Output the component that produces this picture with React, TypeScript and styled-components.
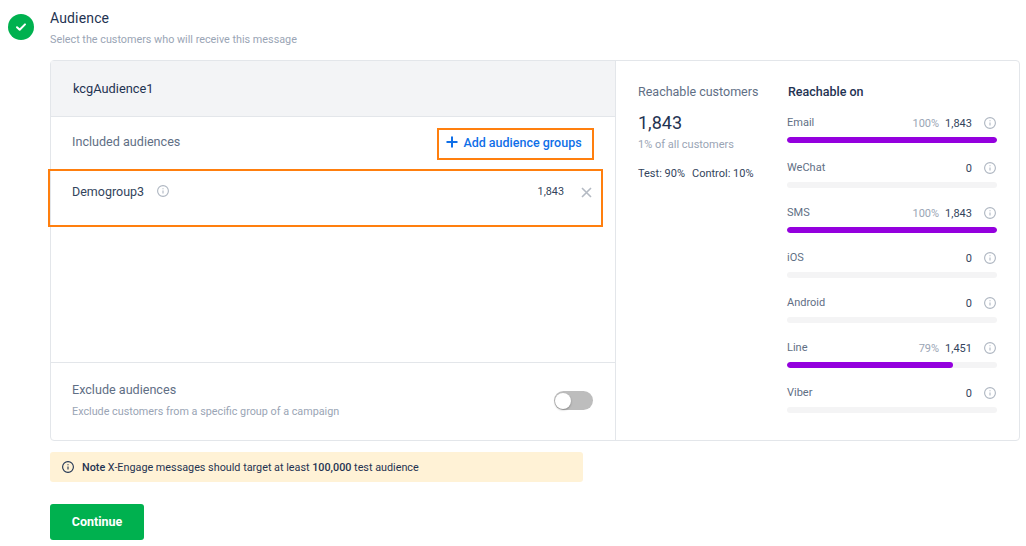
import React from 'react';
import styled, { createGlobalStyle } from 'styled-components';

const GlobalStyle = createGlobalStyle`
  html, body { margin: 0; padding: 0; background: #fff; }
  body { font-family: Roboto, "Liberation Sans", sans-serif; color: #1f3352; overflow: hidden; }
`;

const Page = styled.div`
  width: 1026px;
  height: 546px;
  display: grid;
  grid-template-columns: 50px 970px;
  overflow: hidden;
`;

const StepRail = styled.div`
  padding: 14px 0 0 8px;
`;

const StepBadge = styled.div`
  width: 26px;
  height: 26px;
  border-radius: 50%;
  background: #00b14f;
  display: flex;
  align-items: center;
  justify-content: center;
`;

const Body = styled.div`
  padding-top: 10px;
`;

const Title = styled.div`
  font-size: 14px;
  line-height: 17px;
  letter-spacing: 0.15px;
  color: #1f3352;
`;

const Subtitle = styled.div`
  font-size: 10.8px;
  line-height: 14px;
  margin-top: 6px;
  color: #9aa5b5;
`;

const Card = styled.div`
  margin-top: 13px;
  height: 381px;
  box-sizing: border-box;
  border: 1px solid #e3e6ea;
  border-radius: 4px;
  display: grid;
  grid-template-columns: 565px 1fr;
`;

const LeftPanel = styled.div`
  display: flex;
  flex-direction: column;
  border-right: 1px solid #e3e6ea;
`;

const AudienceName = styled.div`
  height: 56px;
  box-sizing: border-box;
  background: #f3f4f6;
  border-bottom: 1px solid #e3e6ea;
  padding: 0 22px;
  display: flex;
  align-items: center;
  font-size: 12.8px;
  color: #1f3352;
`;

const IncludedHeader = styled.div`
  height: 52px;
  display: flex;
  align-items: center;
  justify-content: space-between;
  padding: 0 21px;
`;

const SectionLabel = styled.div`
  font-size: 12.6px;
  color: #5f6f85;
`;

const IncludedLabel = styled(SectionLabel)`
  margin-bottom: 4px;
`;

const AddButton = styled.div`
  width: 157px;
  height: 32px;
  margin-top: 2px;
  box-sizing: border-box;
  border: 2px solid #ff7f0e;
  padding: 0 3px 4px 0;
  display: flex;
  align-items: center;
  justify-content: center;
  gap: 5px;
  font-size: 12.5px;
  font-weight: 500;
  color: #0f6fe8;
`;

const GroupRow = styled.div`
  position: relative;
  height: 52px;
  display: flex;
  align-items: flex-start;
  padding: 15px 23px 0 21px;
  font-size: 12.5px;
  color: #33445c;
`;

const RowHighlight = styled.div`
  position: absolute;
  left: -3px;
  top: 0;
  width: 555px;
  height: 58px;
  box-sizing: border-box;
  border: 2px solid #ff7f0e;
`;

const GroupName = styled.span`
  margin-right: 13px;
`;

const GroupInfo = styled.span`
  display: flex;
  margin-top: 1px;
`;

const GroupCount = styled.span`
  margin-left: auto;
  margin-right: 17px;
  font-size: 10.8px;
  line-height: 15px;
  color: #33445c;
`;

const Spacer = styled.div`
  flex: 1;
`;

const ExcludeRow = styled.div`
  height: 78px;
  box-sizing: border-box;
  border-top: 1px solid #e3e6ea;
  padding: 0 22px 2px 21px;
  display: flex;
  align-items: center;
  justify-content: space-between;
`;

const ExcludeText = styled.div`
  padding-bottom: 2px;
`;

const ExcludeHint = styled.div`
  font-size: 10.8px;
  margin-top: 8px;
  color: #9aa5b5;
`;

const Toggle = styled.div`
  width: 39px;
  height: 19px;
  border-radius: 10px;
  background: #bdbdbd;
  display: flex;
  align-items: center;
`;

const ToggleKnob = styled.div`
  width: 16px;
  height: 16px;
  margin-left: 1px;
  border-radius: 50%;
  background: #fff;
  box-shadow: 0 1px 2px rgba(0, 0, 0, 0.3);
`;

const RightPanel = styled.div`
  display: grid;
  grid-template-columns: 149px 210px;
  padding: 23px 0 0 22px;
`;

const SummaryLabel = styled.div`
  font-size: 12.5px;
  line-height: 16px;
  color: #5f6f85;
`;

const SummaryValue = styled.div`
  font-size: 18px;
  line-height: 22px;
  margin-top: 12px;
  color: #1f3352;
`;

const SummaryNote = styled.div`
  font-size: 11px;
  line-height: 14px;
  margin-top: 4px;
  color: #9aa5b5;
`;

const SplitLine = styled.div`
  display: flex;
  gap: 7px;
  font-size: 11px;
  line-height: 14px;
  margin-top: 15px;
  color: #33445c;
`;

const ChannelsTitle = styled.div`
  font-size: 12.5px;
  line-height: 16px;
  font-weight: 500;
  padding-left: 1px;
  color: #1f3352;
`;

const ChannelList = styled.div`
  margin-top: 14px;
  display: flex;
  flex-direction: column;
  gap: 16px;
`;

const ChannelHead = styled.div`
  display: flex;
  align-items: center;
  height: 16px;
  box-sizing: border-box;
  padding: 2px 1px 0 0;
  font-size: 11px;
  color: #5f6f85;
`;

const ChannelName = styled.span`
  margin-bottom: 2px;
`;

const ChannelPct = styled.span`
  margin-left: auto;
  color: #9aa5b5;
`;

const ChannelCount = styled.span<{ $first: boolean }>`
  margin-left: ${p => (p.$first ? 'auto' : '6px')};
  margin-right: 12px;
  color: #33445c;
`;

const Track = styled.div`
  height: 6px;
  margin-top: 7px;
  border-radius: 3px;
  background: #f4f4f5;
  overflow: hidden;
`;

const Fill = styled.div`
  height: 100%;
  border-radius: 3px;
  background: #9400de;
`;

const Notice = styled.div`
  margin-top: 11px;
  width: 533px;
  height: 30px;
  box-sizing: border-box;
  background: #fff2d6;
  border-radius: 3px;
  padding-left: 12px;
  display: flex;
  align-items: center;
  gap: 8px;
  font-size: 10.8px;
  color: #1f3352;
`;

const NoticeStrong = styled.span`
  font-weight: 500;
`;

const ContinueButton = styled.button`
  display: block;
  margin-top: 22px;
  width: 94px;
  height: 36px;
  border: none;
  border-radius: 3px;
  padding: 0 0 2px 0;
  background: #00b14f;
  color: #fff;
  font-family: inherit;
  font-size: 12.5px;
  font-weight: 700;
`;

const InfoIcon: React.FC<{ color?: string; size?: number }> = ({ color = '#aeb6c1', size = 12 }) => (
  <svg width={size} height={size} viewBox="0 0 12 12" fill="none" stroke={color} strokeWidth="1.1">
    <circle cx="6" cy="6" r="5.4" />
    <path d="M6 5.4v3M6 3.2v1" />
  </svg>
);

const channels = [
  { name: 'Email', pct: 100, count: '1,843' },
  { name: 'WeChat', pct: 0, count: '0' },
  { name: 'SMS', pct: 100, count: '1,843' },
  { name: 'iOS', pct: 0, count: '0' },
  { name: 'Android', pct: 0, count: '0' },
  { name: 'Line', pct: 79, count: '1,451' },
  { name: 'Viber', pct: 0, count: '0' },
];

const App: React.FC = () => (
  <Page>
    <GlobalStyle />
    <StepRail>
      <StepBadge>
        <svg width="12" height="12" viewBox="0 0 12 12" fill="none" stroke="#fff" strokeWidth="2" strokeLinecap="round" strokeLinejoin="round">
          <path d="M2 6.2l2.7 2.6L10 3.4" />
        </svg>
      </StepBadge>
    </StepRail>
    <Body>
      <Title>Audience</Title>
      <Subtitle>Select the customers who will receive this message</Subtitle>
      <Card>
        <LeftPanel>
          <AudienceName>kcgAudience1</AudienceName>
          <IncludedHeader>
            <IncludedLabel>Included audiences</IncludedLabel>
            <AddButton>
              <svg width="12" height="12" viewBox="0 0 12 12" fill="none" stroke="#0f6fe8" strokeWidth="2">
                <path d="M6 .5v11M.5 6h11" />
              </svg>
              Add audience groups
            </AddButton>
          </IncludedHeader>
          <GroupRow>
            <RowHighlight />
            <GroupName>Demogroup3</GroupName>
            <GroupInfo>
              <InfoIcon />
            </GroupInfo>
            <GroupCount>1,843</GroupCount>
            <svg width="11" height="16" viewBox="0 0 11 16" fill="none" stroke="#b4bac3" strokeWidth="1.6">
              <path d="M1 4l9 9M10 4l-9 9" />
            </svg>
          </GroupRow>
          <Spacer />
          <ExcludeRow>
            <ExcludeText>
              <SectionLabel>Exclude audiences</SectionLabel>
              <ExcludeHint>Exclude customers from a specific group of a campaign</ExcludeHint>
            </ExcludeText>
            <Toggle>
              <ToggleKnob />
            </Toggle>
          </ExcludeRow>
        </LeftPanel>
        <RightPanel>
          <div>
            <SummaryLabel>Reachable customers</SummaryLabel>
            <SummaryValue>1,843</SummaryValue>
            <SummaryNote>1% of all customers</SummaryNote>
            <SplitLine>
              <span>Test: 90%</span>
              <span>Control: 10%</span>
            </SplitLine>
          </div>
          <div>
            <ChannelsTitle>Reachable on</ChannelsTitle>
            <ChannelList>
              {channels.map(c => (
                <div key={c.name}>
                  <ChannelHead>
                    <ChannelName>{c.name}</ChannelName>
                    {c.pct > 0 && <ChannelPct>{c.pct}%</ChannelPct>}
                    <ChannelCount $first={c.pct === 0}>{c.count}</ChannelCount>
                    <InfoIcon />
                  </ChannelHead>
                  <Track>
                    <Fill style={{ width: `${c.pct}%` }} />
                  </Track>
                </div>
              ))}
            </ChannelList>
          </div>
        </RightPanel>
      </Card>
      <Notice>
        <InfoIcon color="#1f3352" />
        <span>
          <NoticeStrong>Note</NoticeStrong> X-Engage messages should target at least <NoticeStrong>100,000</NoticeStrong> test audience
        </span>
      </Notice>
      <ContinueButton>Continue</ContinueButton>
    </Body>
  </Page>
);

export default App;
